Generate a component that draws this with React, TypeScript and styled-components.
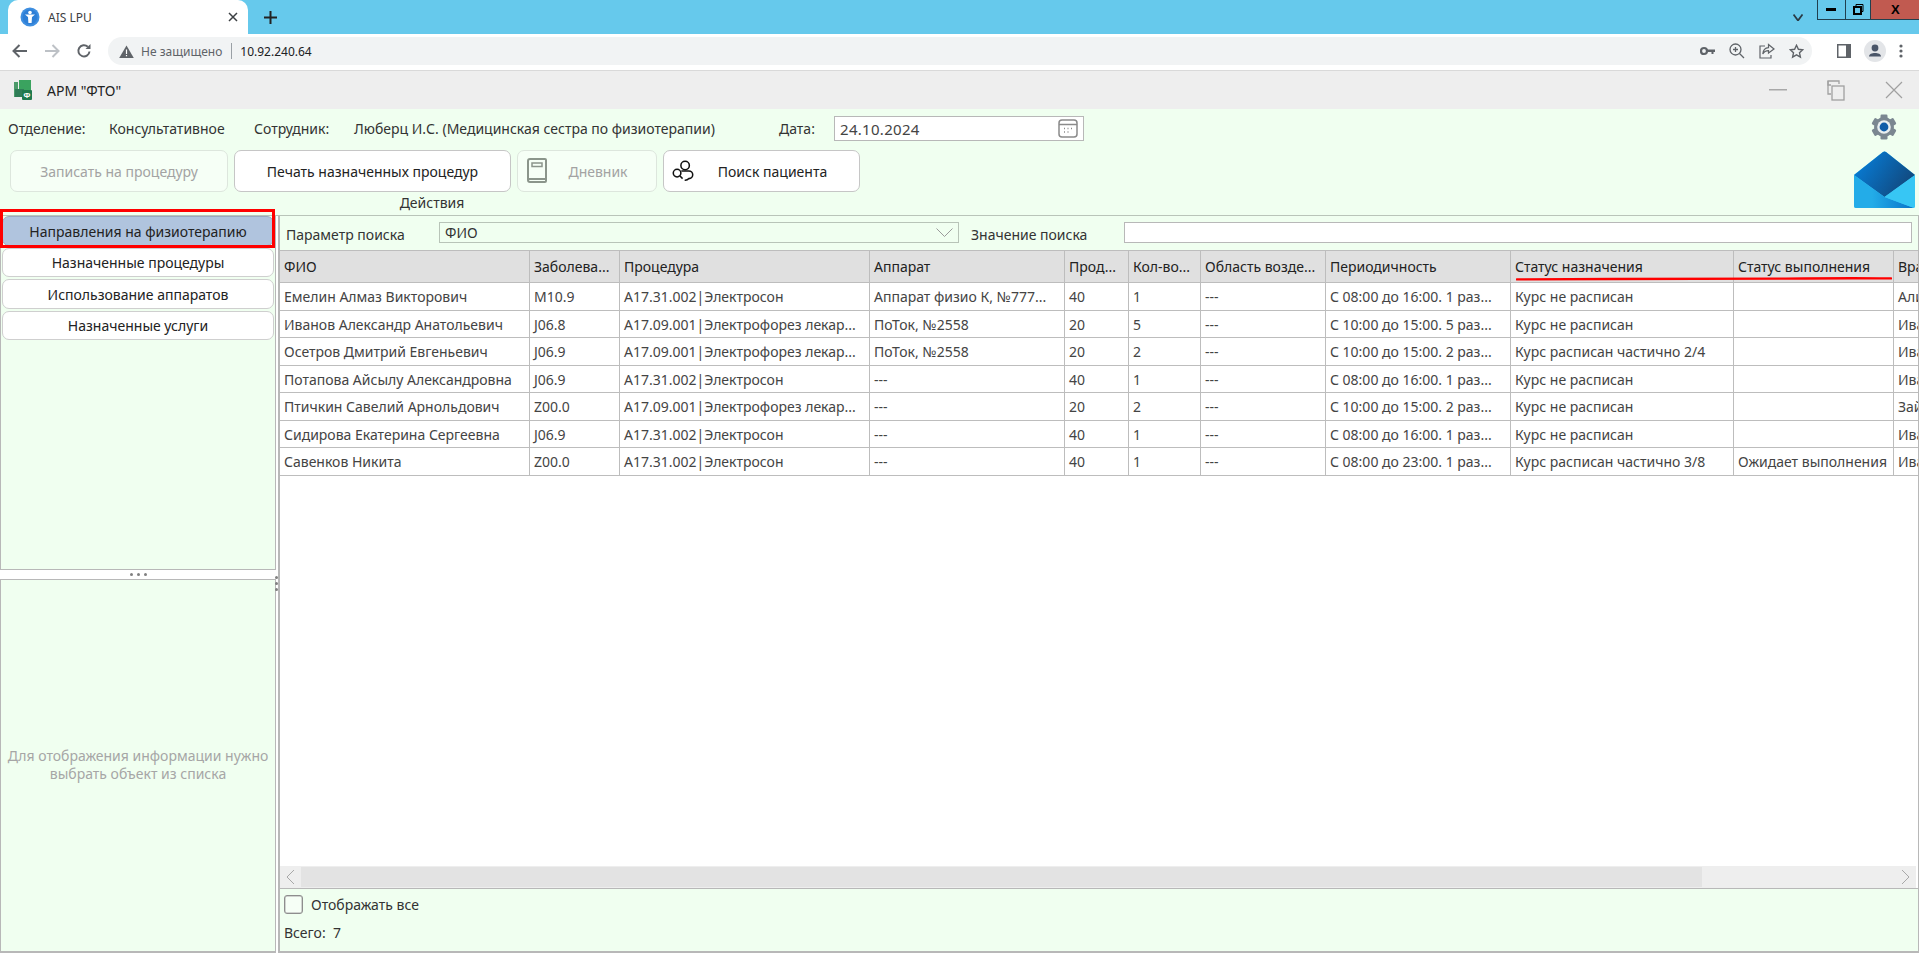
import React from "react";
import styled, { createGlobalStyle } from "styled-components";

const Global = createGlobalStyle`
  html, body { margin: 0; padding: 0; background: #fff; }
  body { font-family: "Noto Sans", "Liberation Sans", sans-serif; overflow: hidden; }
  * { box-sizing: border-box; }
`;

const Page = styled.div`
  width: 1919px; height: 961px; display: flex; flex-direction: column; overflow: hidden; background: #fff;
  font-size: 14px; color: #333;
`;
const TabStrip = styled.div`
  height: 34px; background: #66c9ec; display: flex; align-items: stretch; padding-left: 8px; flex: none;
`;
const Tab = styled.div`
  width: 240px; background: #fff; border-radius: 10px 10px 0 0; display: flex; align-items: center; padding: 0 10px 0 12px; gap: 8px;
  font-size: 12px; color: #3c4043;
`;
const TabTitle = styled.span`flex: 1;`;
const PlusIcon = styled.div`
  width: 44px; display: flex; align-items: center; justify-content: center; padding-left: 0; margin-left: 0;
`;
const Spacer = styled.div`flex: 1;`;
const ChevronSlot = styled.div`display: flex; align-items: center; margin-right: 14px; padding-top: 0;`;
const WinControls = styled.div`
  display: flex; height: 20px; width: 102px; border: 1px solid #20404f; border-top: 0; border-right: 0; flex: none;
`;
const WinButton = styled.div<{ $w: number; $bg?: string }>`
  width: ${p => p.$w}px; background: ${p => p.$bg || "transparent"}; display: flex; align-items: center; justify-content: center;
  border-right: 1px solid #20404f;
  &:last-child { border-right: 0; }
  font-family: "Liberation Sans", sans-serif; font-weight: 700; font-size: 13px; color: #000;
`;
const Toolbar = styled.div`
  height: 37px; border-bottom: 1px solid #d9d9d9; background: #fff; display: flex; align-items: center; padding: 0 0 2px 0; flex: none;
`;
const NavIcons = styled.div`
  width: 108px; display: flex; align-items: center; gap: 0; padding-left: 12px; flex: none;
`;
const NavIconSlot = styled.div`
  width: 33px; display: flex; justify-content: flex-start; align-items: center;
`;
const Omnibox = styled.div`
  width: 1704px; height: 28px; background: #f1f3f4; border-radius: 14px; display: flex; align-items: center; padding: 0 8px 0 11px;
  font-size: 12px; color: #5f6368; flex: none;
`;
const NotSecure = styled.span`margin-left: 7px;`;
const OmniDivider = styled.span`width: 1px; height: 16px; background: #9aa0a6; margin: 0 8px 0 9px;`;
const UrlText = styled.span`color: #202124;`;
const OmniIcons = styled.div`margin-left: auto; display: flex; align-items: center; gap: 14px;`;
const BrowserRight = styled.div`flex: 1; display: flex; align-items: center; justify-content: flex-end; gap: 13px; padding-right: 16px;`;

const TitleBar = styled.div`
  height: 38px; background: #eeeeee; display: flex; align-items: center; padding: 0 16px 0 14px; flex: none;
`;
const AppTitle = styled.span`margin-left: 15px; font-size: 14px; color: #222;`;
const TitleControls = styled.div`margin-left: auto; display: flex; align-items: center; gap: 40px;`;

const Main = styled.div`flex: 1; display: flex; flex-direction: column; min-height: 0;`;
const Header = styled.div`
  height: 107px; flex: none; background: #f0fff0; border-bottom: 1px solid #b9c4b9; display: flex; justify-content: space-between;
`;
const HeaderLeft = styled.div`display: flex; flex-direction: column; padding-top: 7px;`;
const InfoRow = styled.div`height: 25px; display: flex; align-items: center; position: relative; width: 1090px;`;
const InfoText = styled.span<{ $w: number }>`width: ${p => p.$w}px; flex: none; white-space: nowrap;`;
const DateInput = styled.div`
  width: 250px; height: 25px; border: 1px solid #b8b8b8; background: #fff; display: flex; align-items: center; justify-content: space-between;
  padding: 0 5px; font-size: 15px; letter-spacing: 0.3px; color: #444; flex: none;
`;
const ButtonRow = styled.div`display: flex; gap: 6px; margin-top: 9px; padding-left: 10px;`;
const ActionButton = styled.div<{ $w: number; $off?: boolean }>`
  width: ${p => p.$w}px; height: 42px; border-radius: 7px; border: 1px solid ${p => (p.$off ? "#dde6dd" : "#c6c6c6")};
  background: ${p => (p.$off ? "#f6fff6" : "#fff")}; color: ${p => (p.$off ? "#a3a3a3" : "#222")};
  display: flex; align-items: center; justify-content: center; gap: 0; padding: 0 8px; white-space: nowrap; position: relative;
`;
const ButtonIcon = styled.div`width: 22px; flex: none; display: flex;`;
const ButtonLabel = styled.span`flex: 1; text-align: center;`;
const Caption = styled.div`height: 22px; line-height: 22px; margin-top: 0; width: 864px; text-align: center; padding-right: 0; color: #333;`;
const HeaderRight = styled.div`
  width: 64px; margin-right: 3px; display: flex; flex-direction: column; align-items: center; padding-top: 5px;
`;
const GearWrap = styled.div`height: 37px; display: flex; align-items: flex-start;`;

const Body = styled.div`flex: 1; display: flex; min-height: 0;`;
const LeftCol = styled.div`width: 276px; flex: none; display: flex; flex-direction: column;`;
const TopPanel = styled.div`
  height: 354px; background: #f0fff0; border-left: 1px solid #b8b8b8; border-right: 1px solid #b8b8b8; border-bottom: 1px solid #b8b8b8; flex: none;
`;
const NavList = styled.div`display: flex; flex-direction: column; gap: 2px; padding: 0 1px; position: relative;`;
const NavItem = styled.div<{ $active?: boolean; $h: number }>`
  height: ${p => p.$h}px; border: 1px solid ${p => (p.$active ? "#98a8bf" : "#cfcfcf")}; border-radius: 7px; background: ${p => (p.$active ? "#b0c4de" : "#fff")};
  display: flex; align-items: center; justify-content: center; color: #222;
`;
const RedBox = styled.div`
  position: absolute; left: -1px; top: -7px; width: 275px; height: 39px; border: 3px solid #f00; pointer-events: none;
`;
const Gutter = styled.div`
  height: 9px; flex: none; display: flex; align-items: center; justify-content: center; gap: 4px;
`;
const GutterDot = styled.span`width: 3px; height: 3px; border-radius: 50%; background: #808080;`;
const BottomPanel = styled.div`
  flex: 1; background: #f0fff0; border: 1px solid #b8b8b8; border-bottom-width: 2px; display: flex; align-items: center; justify-content: center; text-align: center;
  color: #a6a6a6; line-height: 18px; padding: 0 0 2px;
`;
const Splitter = styled.div`width: 2px; flex: none; position: relative;`;
const SplitDots = styled.div`
  position: absolute; left: -1px; top: 360px; display: flex; flex-direction: column; gap: 3px;
`;
const SplitDot = styled.span`width: 3px; height: 3px; border-radius: 50%; background: #808080;`;

const RightCol = styled.div`flex: 1; min-width: 0; display: flex; flex-direction: column; border-right: 1px solid #b8b8b8; border-left: 2px solid #b8b8b8;`;
const SearchRow = styled.div`
  height: 34px; flex: none; background: #f0fff0; display: flex; align-items: flex-start; padding: 6px 6px 0 6px; 
`;
const SearchLabel = styled.span<{ $w: number }>`width: ${p => p.$w}px; flex: none; line-height: 26px; white-space: nowrap; color: #333;`;
const Combo = styled.div`
  width: 520px; height: 21px; flex: none; border: 1px solid #b8c4b8; background: #f0fff0; display: flex; align-items: center; justify-content: space-between;
  padding: 0 5px; margin-right: 12px; color: #333;
`;
const SearchInput = styled.div`width: 788px; height: 21px; flex: none; border: 1px solid #b8b8b8; background: #fff;`;
const TableBox = styled.div`flex: 1; min-height: 0; background: #fff; display: flex; flex-direction: column; border-bottom: 1px solid #b8b8b8;`;
const TableScroll = styled.div`flex: 1; min-height: 0; overflow: hidden; position: relative;`;
const Table = styled.table`
  table-layout: fixed; border-collapse: separate; border-spacing: 0; width: 1656px; font-size: 14px;
`;
const Th = styled.th`
  height: 33px; background: #e0e0e0; font-weight: 400; text-align: left; padding: 0 4px; color: #222; border-top: 1px solid #bdbdbd;
  border-right: 1px solid #bdbdbd; border-bottom: 1px solid #bdbdbd; white-space: nowrap; overflow: hidden;
`;
const Td = styled.td`
  padding: 0 4px; color: #444; border-right: 1px solid #bdbdbd; border-bottom: 1px solid #bdbdbd; white-space: nowrap; overflow: hidden;
`;
const Tr = styled.tr<{ $h: number }>`
  & > td { height: ${p => p.$h}px; }
`;
const Underline = styled.svg`
  position: absolute; left: 1236px; top: 26px; pointer-events: none;
`;
const HScroll = styled.div`height: 22px; flex: none; background: #eeeeee; display: flex; align-items: center; margin-right: 2px;`;
const ScrollArrow = styled.div`width: 21px; height: 100%; display: flex; align-items: center; justify-content: center; flex: none;`;
const ScrollThumb = styled.div`width: 1401px; height: 20px; background: #e3e3e3; flex: none;`;
const Footer = styled.div`
  height: 64px; flex: none; background: #f0fff0; border-bottom: 2px solid #b8b8b8; padding: 5px 4px 0; display: flex; flex-direction: column;
`;
const CheckRow = styled.div`display: flex; align-items: center; height: 20px; gap: 8px; color: #333;`;
const CheckBox = styled.span`width: 19px; height: 19px; border: 1px solid #8e8e8e; border-radius: 3px; background: #f6fff6; box-shadow: inset 0 0 0 0.5px #aaa;`;
const TotalRow = styled.div`margin-top: 9px; line-height: 20px; color: #333; white-space: pre;`;
const BottomStrip = styled.div`height: 8px; flex: none; background: #fff;`;

const Favicon = () => (
  <svg width="20" height="20" viewBox="0 0 20 20" style={{ flex: "none" }}>
    <circle cx="10" cy="10" r="9.5" fill="#3f8fe0" />
    <circle cx="10" cy="10" r="7.5" fill="#2e7fd6" />
    <circle cx="10" cy="5.5" r="1.8" fill="#fff" />
    <path d="M5 7.5 L15 7.5 L12 10 L11.6 16 H8.4 L8 10 Z" fill="#fff" />
  </svg>
);
const AppIcon = () => (
  <svg width="18" height="20" viewBox="0 0 18 20" style={{ flex: "none" }}>
    <rect x="0" y="2" width="4" height="15" fill="#4c9a6a" />
    <rect x="5" y="0" width="12" height="11" fill="#3aa35f" />
    <rect x="1" y="9" width="9" height="8" fill="#2f7d57" />
    <rect x="8" y="10" width="10" height="10" rx="1" fill="#1f7a4e" />
    <text x="13" y="18" textAnchor="middle" fontSize="8" fontFamily="Liberation Sans" fontWeight="700" fill="#fff">Ф</text>
  </svg>
);
const Gear = () => (
  <svg width="26" height="26" viewBox="0 0 26 26">
    {[0, 60, 120, 180, 240, 300].map(a => (
      <rect key={a} x="9.5" y="0.5" width="7" height="6" rx="1.2" fill="#7b8791" transform={`rotate(${a} 13 13)`} />
    ))}
    <circle cx="13" cy="13" r="10" fill="#7b8791" />
    <circle cx="13" cy="13" r="6.8" fill="#e9eef0" />
    <circle cx="13" cy="13" r="4.4" fill="#0f5ca8" />
  </svg>
);
const Envelope = () => (
  <svg width="61" height="57" viewBox="0 0 61 57">
    <defs>
      <linearGradient id="flap" x1="0" y1="0" x2="1" y2="0.5">
        <stop offset="0.2" stopColor="#0878cf" />
        <stop offset="1" stopColor="#114a80" />
      </linearGradient>
      <linearGradient id="low" x1="0" y1="0" x2="1" y2="0">
        <stop offset="0.3" stopColor="#23ace8" />
        <stop offset="1" stopColor="#0872c8" />
      </linearGradient>
    </defs>
    <path d="M29 1 Q30.5 0 32 1 L61 24 L61 55 Q61 57 59 57 L2 57 Q0 57 0 55 L0 24 Z" fill="#37c6f4" />
    <path d="M0 24 L30.5 46 L61 24 L32 1 Q30.5 0 29 1 Z" fill="url(#flap)" />
    <path d="M0 24 L30.5 46 L60 57 L2 57 Q0 57 0 55 Z" fill="url(#low)" />
    <path d="M30.5 46 L61 24 L61 55 Q61 56 60 57 Z" fill="#37c6f4" />
  </svg>
);
const BookIcon = () => (
  <svg width="22" height="26" viewBox="0 0 22 26" fill="none" stroke="#8b958b" strokeWidth="2">
    <path d="M3 24 L19 24 A1 1 0 0 0 20 23 L20 2 A1 1 0 0 0 19 1 L4 1 A2 2 0 0 0 2 3 L2 22 A2 2 0 0 0 4 24" />
    <path d="M2 21 L20 21" />
    <rect x="6" y="5" width="10" height="3.5" strokeWidth="1.5" />
  </svg>
);
const PatientIcon = () => (
  <svg width="26" height="26" viewBox="0 0 26 26" fill="none" stroke="#111" strokeWidth="1.8">
    <circle cx="15.5" cy="6.5" r="5" />
    <circle cx="6" cy="15.5" r="4.5" />
    <path d="M9.5 19 L12.5 22" />
    <path d="M11 13 L20 13 A4.5 4.5 0 0 1 20 22 A 6 6 0 0 1 15 24" />
  </svg>
);
const CalendarIcon = () => (
  <svg width="20" height="19" viewBox="0 0 20 19" fill="none" stroke="#8a8a8a" strokeWidth="1.5">
    <rect x="1" y="1" width="18" height="17" rx="3" />
    <path d="M1 5.5 H19" />
    <path d="M6 9.5h1M9.5 9.5h1M13 9.5h1M6 13h1M9.5 13h1" strokeWidth="1.4" />
  </svg>
);
const Chevron = ({ w = 17, h = 9, color = "#9a9a9a", sw = 1 }: { w?: number; h?: number; color?: string; sw?: number }) => (
  <svg width={w} height={h} viewBox={`0 0 ${w} ${h}`} fill="none" stroke={color} strokeWidth={sw}>
    <path d={`M0.5 0.5 L${w / 2} ${h - 0.5} L${w - 0.5} 0.5`} />
  </svg>
);
const G = "#5f6368";
const BackIcon = ({ color = G }: { color?: string }) => (
  <svg width="16" height="14" viewBox="0 0 16 14" fill="none" stroke={color} strokeWidth="2"><path d="M15 7H2M7.5 1L1.5 7l6 6" /></svg>
);
const ForwardIcon = () => (
  <svg width="16" height="14" viewBox="0 0 16 14" fill="none" stroke="#bdc1c6" strokeWidth="2"><path d="M1 7h13M8.5 1l6 6-6 6" /></svg>
);
const ReloadIcon = () => (
  <svg width="16" height="16" viewBox="0 0 16 16" fill="none" stroke={G} strokeWidth="2"><path d="M13.5 8.5A5.6 5.6 0 1 1 11.8 3.8" /><path d="M14.5 1v5h-5z" fill={G} stroke="none" /></svg>
);
const WarnIcon = () => (
  <svg width="15" height="13" viewBox="0 0 15 13" style={{ flex: "none" }}><path d="M7.5 0.5L14.8 13H0.2z" fill="#5f6368" /><path d="M6.9 4.5h1.2v4.5H6.9zM6.9 10h1.2v1.2H6.9z" fill="#fff" /></svg>
);
const KeyIcon = () => (
  <svg width="15" height="10" viewBox="0 0 15 10"><circle cx="4" cy="5" r="3" fill="none" stroke={G} strokeWidth="2.2" /><path d="M6.5 3.5H15V6H13.5V8H11.5V6H6.5z" fill={G} /></svg>
);
const ZoomIcon = () => (
  <svg width="16" height="16" viewBox="0 0 16 16" fill="none" stroke={G} strokeWidth="1.3"><circle cx="6.5" cy="6.5" r="5.5" /><path d="M10.5 10.5L15 15M6.5 4v5M4 6.5h5" /></svg>
);
const ShareIcon = () => (
  <svg width="16" height="16" viewBox="0 0 16 16" fill="none" stroke={G} strokeWidth="1.2"><path d="M6 3H1v12h11v-3" /><path d="M9.5 1.5L15 6l-5.5 4V7.7C7 7.7 5 8.7 3.8 11c.3-3.6 2.3-6.2 5.7-6.4z" /></svg>
);
const StarIcon = () => (
  <svg width="15" height="15" viewBox="0 0 15 15" fill="none" stroke={G} strokeWidth="1.4"><path d="M7.5 1.3l1.9 4 4.3.5-3.2 3 .9 4.3-3.9-2.2-3.9 2.2.9-4.3-3.2-3 4.3-.5z" /></svg>
);
const PanelIcon = () => (
  <svg width="14" height="14" viewBox="0 0 14 14"><rect width="14" height="14" fill={G} /><rect x="1.5" y="1.5" width="7.5" height="11" fill="#fff" /></svg>
);
const AvatarIcon = () => (
  <svg width="22" height="22" viewBox="0 0 22 22"><circle cx="11" cy="11" r="11" fill="#e3e5e8" /><circle cx="11" cy="8" r="3.4" fill="#4a5568" /><path d="M5 16.5c0-2.6 3-3.6 6-3.6s6 1 6 3.6z" fill="#4a5568" /></svg>
);
const DotsIcon = () => (
  <svg width="4" height="14" viewBox="0 0 4 14" fill={G}><circle cx="2" cy="2" r="1.6" /><circle cx="2" cy="7" r="1.6" /><circle cx="2" cy="12" r="1.6" /></svg>
);

const colWidths = [250, 90, 250, 195, 64, 72, 125, 185, 223, 160, 42];
const heads = ["ФИО", "Заболева...", "Процедура", "Аппарат", "Прод...", "Кол-во...", "Область возде...", "Периодичность", "Статус назначения", "Статус выполнения", "Врач"];
const elec = "A17.31.002|Электросон";
const phor = "A17.09.001|Электрофорез лекар...";
const rows: string[][] = [
  ["Емелин Алмаз Викторович", "M10.9", elec, "Аппарат физио К, №777...", "40", "1", "---", "С 08:00 до 16:00. 1 раз...", "Курс не расписан", "", "Алиева"],
  ["Иванов Александр Анатольевич", "J06.8", phor, "ПоТок, №2558", "20", "5", "---", "С 10:00 до 15:00. 5 раз...", "Курс не расписан", "", "Иванова"],
  ["Осетров Дмитрий Евгеньевич", "J06.9", phor, "ПоТок, №2558", "20", "2", "---", "С 10:00 до 15:00. 2 раз...", "Курс расписан частично 2/4", "", "Иванова"],
  ["Потапова Айсылу Александровна", "J06.9", elec, "---", "40", "1", "---", "С 08:00 до 16:00. 1 раз...", "Курс не расписан", "", "Иванова"],
  ["Птичкин Савелий Арнольдович", "Z00.0", phor, "---", "20", "2", "---", "С 10:00 до 15:00. 2 раз...", "Курс не расписан", "", "Зайцева"],
  ["Сидирова Екатерина Сергеевна", "J06.9", elec, "---", "40", "1", "---", "С 08:00 до 16:00. 1 раз...", "Курс не расписан", "", "Иванова"],
  ["Савенков Никита", "Z00.0", elec, "---", "40", "1", "---", "С 08:00 до 23:00. 1 раз...", "Курс расписан частично 3/8", "Ожидает выполнения", "Иванова"],
];

export default function App() {
  return (
    <Page>
      <Global />
      <TabStrip>
        <Tab>
          <Favicon />
          <TabTitle>AIS LPU</TabTitle>
          <svg width="10" height="10" viewBox="0 0 10 10" stroke="#3c4043" strokeWidth="1.5"><path d="M1 1l8 8M9 1l-8 8" /></svg>
        </Tab>
        <PlusIcon>
          <svg width="13" height="13" viewBox="0 0 13 13" stroke="#222" strokeWidth="2"><path d="M6.5 0v13M0 6.5h13" /></svg>
        </PlusIcon>
        <Spacer />
        <ChevronSlot>
          <Chevron w={10} h={7} color="#2a3b45" sw={1.8} />
        </ChevronSlot>
        <WinControls>
          <WinButton $w={28}>
            <svg width="10" height="3"><rect width="10" height="3" fill="#000" /></svg>
          </WinButton>
          <WinButton $w={26}>
            <svg width="11" height="11" viewBox="0 0 11 11" fill="none" stroke="#000"><path d="M3 2.5V0.5h7v7H8.5" /><rect x="1" y="3" width="7" height="7" strokeWidth="2" /></svg>
          </WinButton>
          <WinButton $w={48} $bg="#c15a50">X</WinButton>
        </WinControls>
      </TabStrip>
      <Toolbar>
        <NavIcons>
          <NavIconSlot><BackIcon /></NavIconSlot>
          <NavIconSlot><ForwardIcon /></NavIconSlot>
          <NavIconSlot><ReloadIcon /></NavIconSlot>
        </NavIcons>
        <Omnibox>
          <WarnIcon />
          <NotSecure>Не защищено</NotSecure>
          <OmniDivider />
          <UrlText>10.92.240.64</UrlText>
          <OmniIcons>
            <KeyIcon />
            <ZoomIcon />
            <ShareIcon />
            <StarIcon />
          </OmniIcons>
        </Omnibox>
        <BrowserRight>
          <PanelIcon />
          <AvatarIcon />
          <DotsIcon />
        </BrowserRight>
      </Toolbar>
      <TitleBar>
        <AppIcon />
        <AppTitle>АРМ "ФТО"</AppTitle>
        <TitleControls>
          <svg width="18" height="2"><rect width="18" height="1.5" fill="#a8a8a8" /></svg>
          <svg width="18" height="21" viewBox="0 0 18 21" fill="none" stroke="#a0a0a0" strokeWidth="1.3"><path d="M4 5H1V1h11v3" /><path d="M1 1v13h3" /><rect x="5" y="6" width="12" height="14" /></svg>
          <svg width="18" height="18" viewBox="0 0 18 18" stroke="#a0a0a0" strokeWidth="1.2"><path d="M1 1l16 16M17 1L1 17" /></svg>
        </TitleControls>
      </TitleBar>
      <Main>
        <Header>
          <HeaderLeft>
            <InfoRow>
              <InfoText $w={8} />
              <InfoText $w={101}>Отделение:</InfoText>
              <InfoText $w={145}>Консультативное</InfoText>
              <InfoText $w={100}>Сотрудник:</InfoText>
              <InfoText $w={425}>Люберц И.С. (Медицинская сестра по физиотерапии)</InfoText>
              <InfoText $w={55}>Дата:</InfoText>
              <DateInput>
                24.10.2024
                <CalendarIcon />
              </DateInput>
            </InfoRow>
            <ButtonRow>
              <ActionButton $w={218} $off><ButtonLabel>Записать на процедуру</ButtonLabel></ActionButton>
              <ActionButton $w={277}><ButtonLabel>Печать назначенных процедур</ButtonLabel></ActionButton>
              <ActionButton $w={140} $off><ButtonIcon><BookIcon /></ButtonIcon><ButtonLabel>Дневник</ButtonLabel></ActionButton>
              <ActionButton $w={197}><ButtonIcon><PatientIcon /></ButtonIcon><ButtonLabel>Поиск пациента</ButtonLabel></ActionButton>
            </ButtonRow>
            <Caption>Действия</Caption>
          </HeaderLeft>
          <HeaderRight>
            <GearWrap><Gear /></GearWrap>
            <Envelope />
          </HeaderRight>
        </Header>
        <Body>
          <LeftCol>
            <TopPanel>
              <NavList>
                <NavItem $active $h={30}>Направления на физиотерапию</NavItem>
                <NavItem $h={29}>Назначенные процедуры</NavItem>
                <NavItem $h={30}>Использование аппаратов</NavItem>
                <NavItem $h={29}>Назначенные услуги</NavItem>
                <RedBox />
              </NavList>
            </TopPanel>
            <Gutter><GutterDot /><GutterDot /><GutterDot /></Gutter>
            <BottomPanel>Для отображения информации нужно<br />выбрать объект из списка</BottomPanel>
          </LeftCol>
          <Splitter>
            <SplitDots><SplitDot /><SplitDot /><SplitDot /></SplitDots>
          </Splitter>
          <RightCol>
            <SearchRow>
              <SearchLabel $w={153}>Параметр поиска</SearchLabel>
              <Combo>ФИО<Chevron /></Combo>
              <SearchLabel $w={153}>Значение поиска</SearchLabel>
              <SearchInput />
            </SearchRow>
            <TableBox>
              <TableScroll>
                <Table>
                  <colgroup>
                    {colWidths.map((w, i) => <col key={i} style={{ width: w }} />)}
                  </colgroup>
                  <thead>
                    <tr>{heads.map(h => <Th key={h}>{h}</Th>)}</tr>
                  </thead>
                  <tbody>
                    {rows.map((r, i) => (
                      <Tr key={i} $h={i % 2 === 0 ? 28 : 27}>
                        {r.map((c, j) => <Td key={j}>{c}</Td>)}
                      </Tr>
                    ))}
                  </tbody>
                </Table>
                <Underline width="376" height="5" viewBox="0 0 376 5">
                  <path d="M1 3.4 C90 2.6 200 3.2 270 2.6 S360 2.4 375 2.4" fill="none" stroke="#f00" strokeWidth="2.4" strokeLinecap="round" />
                </Underline>
              </TableScroll>
              <HScroll>
                <ScrollArrow>
                  <svg width="9" height="16" viewBox="0 0 9 16" fill="none" stroke="#a8a8a8"><path d="M8 1L1 8l7 7" /></svg>
                </ScrollArrow>
                <ScrollThumb />
                <Spacer />
                <ScrollArrow>
                  <svg width="9" height="16" viewBox="0 0 9 16" fill="none" stroke="#a8a8a8"><path d="M1 1l7 7-7 7" /></svg>
                </ScrollArrow>
              </HScroll>
            </TableBox>
            <Footer>
              <CheckRow><CheckBox />Отображать все</CheckRow>
              <TotalRow>Всего:  7</TotalRow>
            </Footer>
          </RightCol>
        </Body>
        <BottomStrip />
      </Main>
    </Page>
  );
}
